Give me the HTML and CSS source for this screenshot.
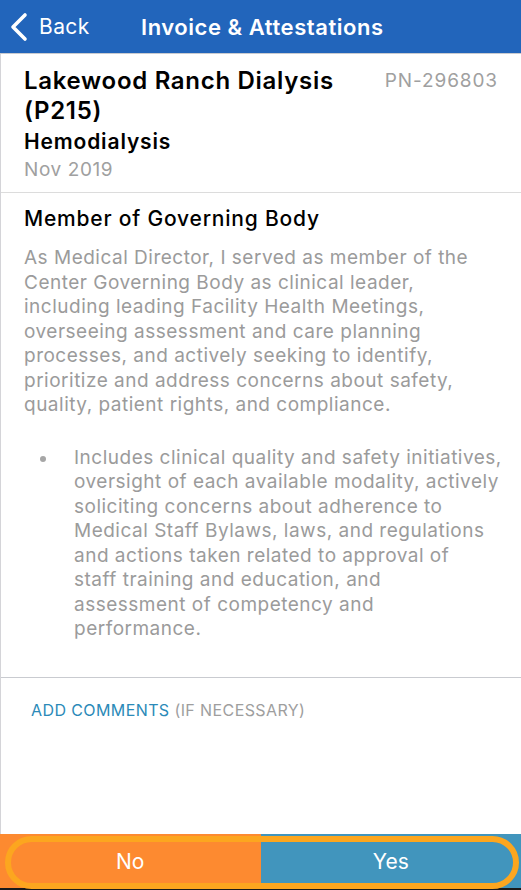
FILE: index.html
```html
<!DOCTYPE html>
<html>
<head>
<meta charset="utf-8">
<link rel="stylesheet" href="styles.css">
</head>
<body>
<div class="page">
  <header class="nav">
    <div class="back">
      <svg class="chev" width="20" height="30" viewBox="0 0 20 30"><path d="M16 3 L4 15 L16 27" fill="none" stroke="#fff" stroke-width="3.6" stroke-linecap="round" stroke-linejoin="round"/></svg>
      <span>Back</span>
    </div>
    <div class="nav-title">Invoice &amp; Attestations</div>
  </header>
  <section class="info">
    <div class="info-top">
      <h1 class="facility">Lakewood Ranch Dialysis (P215)</h1>
      <div class="pn">PN-296803</div>
    </div>
    <div class="modality">Hemodialysis</div>
    <div class="date">Nov 2019</div>
  </section>
  <section class="content">
    <h2 class="heading">Member of Governing Body</h2>
    <p class="desc">As Medical Director, I served as member of the Center Governing Body as clinical leader, including leading Facility Health Meetings, overseeing assessment and care planning processes, and actively seeking to identify, prioritize and address concerns about safety, quality, patient rights, and compliance.</p>
    <ul class="bullets">
      <li>Includes clinical quality and safety initiatives,<br> oversight of each available modality, actively<br> soliciting concerns about adherence to<br> Medical Staff Bylaws, laws, and regulations<br> and actions taken related to approval of<br> staff training and education, and<br> assessment of competency and<br> performance.</li>
    </ul>
  </section>
  <section class="comments">
    <span class="add">ADD COMMENTS</span> <span class="opt">(IF NECESSARY)</span>
  </section>
  <footer class="actions">
    <div class="btn no">No</div>
    <div class="btn yes">Yes</div>
    <div class="ring"></div>
  </footer>
</div>
</body>
</html>
```
FILE: styles.css
```css
html, body {
  margin: 0;
  padding: 0;
  background: #fff;
}
body {
  width: 521px;
  height: 890px;
  overflow: hidden;
  font-family: Inter, "Noto Sans", sans-serif;
}
.page {
  height: 890px;
  display: flex;
  flex-direction: column;
  border-left: 1px solid #d4d4d8;
  box-sizing: border-box;
}
.nav {
  height: 53px;
  flex: none;
  background: #2265bb;
  border-bottom: 1px solid #c9cbd0;
  display: flex;
  align-items: center;
  color: #fff;
  margin-left: -1px;
}
.back {
  display: flex;
  align-items: center;
  width: 141px;
  padding-left: 9px;
  box-sizing: border-box;
  font-size: 21px;
  letter-spacing: 0.4px;
  gap: 10px;
}
.chev { display: block; }
.nav-title {
  font-size: 22px;
  font-weight: 600;
  letter-spacing: 0.55px;
}
.info {
  padding: 12px 23px 9px 23px;
  border-bottom: 1px solid #dcdcdc;
}
.info-top {
  display: flex;
  justify-content: space-between;
  align-items: flex-start;
}
.facility {
  margin: 0;
  font-size: 24px;
  line-height: 30px;
  font-weight: 600;
  letter-spacing: 0.7px;
  color: #000;
  width: 340px;
}
.pn {
  font-size: 19px;
  line-height: 30px;
  letter-spacing: 0.9px;
  color: #a0a0a0;
}
.modality {
  font-size: 21px;
  font-weight: 600;
  line-height: 30px;
  letter-spacing: 0.85px;
  color: #000;
  margin-top: 1px;
}
.date {
  font-size: 19px;
  line-height: 26px;
  letter-spacing: 0.6px;
  color: #a0a0a0;
}
.content {
  padding: 12px 23px 35px 23px;
  border-bottom: 1px solid #c9cbd0;
}
.heading {
  margin: 0 0 13px;
  font-size: 21px;
  font-weight: 500;
  line-height: 28px;
  letter-spacing: 0.8px;
  color: #000;
}
.desc {
  margin: 0;
  font-size: 19px;
  line-height: 24.5px;
  letter-spacing: 0.5px;
  color: #9b9b9b;
}
.bullets {
  list-style: none;
  margin: 28px -18px 0 0;
  padding: 0 0 0 50px;
  font-size: 19px;
  line-height: 24.5px;
  letter-spacing: 0.5px;
  color: #9b9b9b;
}
.bullets li { position: relative; }
.bullets li::before {
  content: "";
  position: absolute;
  left: -34px;
  top: 10px;
  width: 6px;
  height: 6px;
  border-radius: 50%;
  background: #a6a6a6;
}
.comments {
  flex: 1;
  padding: 22px 30px;
  font-size: 16px;
  letter-spacing: 0.4px;
}
.add { color: #2b8ab8; }
.opt { color: #9e9e9e; }
.actions {
  position: relative;
  height: 56px;
  flex: none;
  display: flex;
  margin-left: -1px;
  border-bottom: 2px solid #1a1a1a;
  box-sizing: border-box;
}
.btn {
  flex: 1;
  display: flex;
  align-items: center;
  justify-content: center;
  color: #fff;
  font-size: 21px;
}
.no { background: #fd8a30; }
.yes { background: #4195bd; }
.ring {
  position: absolute;
  left: 5px;
  right: 2px;
  top: 2px;
  bottom: -1px;
  border: 6px solid #fca61f;
  border-radius: 28px;
}
```
